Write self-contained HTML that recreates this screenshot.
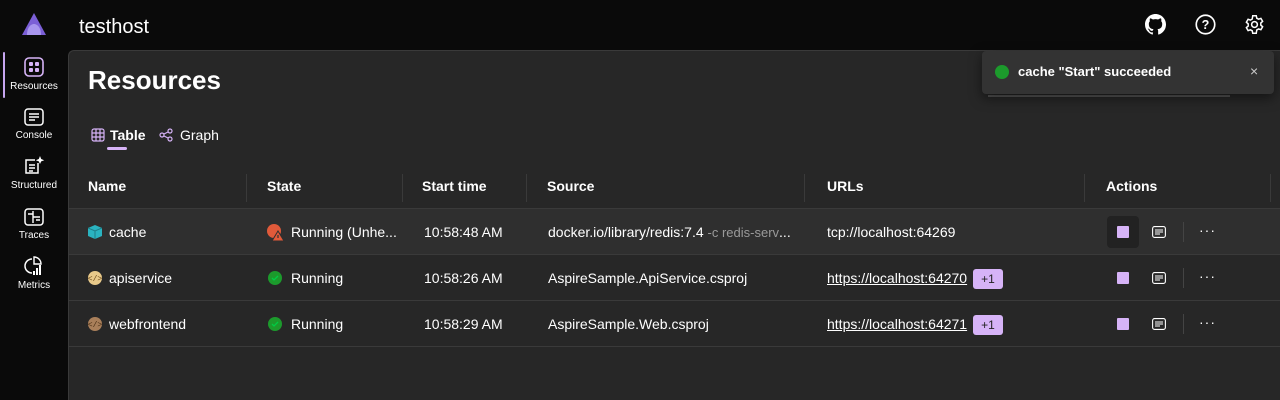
<!DOCTYPE html>
<html><head><meta charset="utf-8"><style>
*{box-sizing:border-box;margin:0;padding:0}
body{width:1280px;height:400px;background:#0a0a0a;font-family:"Liberation Sans",sans-serif;color:#fff;overflow:hidden;position:relative;font-size:14px}
.hdr{position:absolute;left:0;top:0;width:1280px;height:50px;background:#0a0a0a}
.main{position:absolute;left:68px;top:50px;width:1212px;height:350px;background:#272727;border-left:1px solid #3a3a3a;border-top:1px solid #3a3a3a;border-top-left-radius:6px}
.nav{position:absolute;left:0;width:68px;text-align:center;font-size:10px;color:#fff}
.nav svg{display:block;margin:0 auto 4px}
.abs{position:absolute}
.row{position:absolute;left:0;width:1212px;height:46px;border-bottom:1px solid #3a3a3a}
.cell{position:absolute;top:0;line-height:46px;white-space:nowrap;font-size:14px}
.th{position:absolute;top:0;line-height:44px;font-weight:bold;font-size:14px}
.div{position:absolute;top:10px;width:1px;height:28px;background:#3a3a3a}
.stop{position:absolute;width:12px;height:12px;background:#d6b3f7;border-radius:1px}
.badge{display:inline-block;background:#d6b3f7;color:#222;font-size:12px;line-height:20px;padding:0 8px;border-radius:3px;margin-left:6px;vertical-align:middle}
.lnk{text-decoration:underline;color:#fff}
</style></head><body>
<div class="hdr">
<svg class="abs" style="left:22px;top:13px" width="24" height="22" viewBox="0 0 24 22"><path d="M12 0L24 22H0Z" fill="#7b5fd6"/><path d="M5 22C5 14 9 11 12 11s7 3 7 11Z" fill="#a895ee"/></svg>
<div class="abs" style="left:79px;top:16px;font-size:20px">testhost</div>
<svg class="abs" style="left:1145px;top:14px" width="21" height="21" viewBox="0 0 16 16"><path fill="#fff" d="M8 0C3.58 0 0 3.58 0 8c0 3.54 2.290 6.53 5.47 7.59.4.07.55-.17.55-.38v-1.33c-2.23.48-2.7-1.070-2.7-1.07-.36-.92-.89-1.17-.89-1.17-.73-.5.06-.49.06-.49.8.06 1.23.83 1.23.83.72 1.22 1.870.87 2.33.66.07-.52.28-.87.51-1.07-1.78-.2-3.64-.89-3.64-3.95 0-.87.31-1.59.82-2.15-.08-.2-.36-1.02.08-2.12 0 0 .67-.21 2.2.82a7.6 7.6 0 014 0c1.53-1.04 2.2-.82 2.2-.82.44 1.1.16 1.92.08 2.12.51.56.82 1.27.82 2.15 0 3.07-1.87 3.75-3.65 3.95.29.25.54.73.54 1.48v2.2c0 .21.15.46.55.38A8 8 0 0016 8c0-4.42-3.58-8-8-8z"/></svg>
<svg class="abs" style="left:1195px;top:14px" width="21" height="21" viewBox="0 0 20 20"><circle cx="10" cy="10" r="8.8" fill="none" stroke="#fff" stroke-width="1.6"/><text x="10" y="14.5" text-anchor="middle" font-size="12" font-weight="bold" fill="#fff" font-family="Liberation Sans">?</text></svg>
<svg class="abs" style="left:1244px;top:14px" width="21" height="21" viewBox="0 0 24 24"><path fill="none" stroke="#fff" stroke-width="1.7" d="M10 2h4l.6 2.8 2 1.1 2.7-.9 2 3.4-2.1 1.9v2.4l2.1 1.9-2 3.4-2.7-.9-2 1.1L14 22h-4l-.6-2.8-2-1.1-2.7.9-2-3.4 2.1-1.9V11.3L2.7 9.4l2-3.4 2.7.9 2-1.1z"/><circle cx="12" cy="12" r="3.3" fill="none" stroke="#fff" stroke-width="1.7"/></svg>
</div>
<div class="abs" style="left:3px;top:52px;width:2px;height:46px;background:#c6a5f0;border-radius:1px"></div>
<div class="nav" style="top:57px"><svg width="20" height="20" viewBox="0 0 20 20"><rect x="1" y="1" width="18" height="18" rx="4" fill="none" stroke="#d6b3f7" stroke-width="1.6"/><rect x="5" y="5" width="4" height="4" rx="1" fill="#d6b3f7"/><rect x="11" y="5" width="4" height="4" rx="1" fill="#d6b3f7"/><rect x="5" y="11" width="4" height="4" rx="1" fill="#d6b3f7"/><rect x="11" y="11" width="4" height="4" rx="1" fill="#d6b3f7"/></svg>Resources</div>
<div class="nav" style="top:108px"><svg width="20" height="18" viewBox="0 0 20 18"><rect x="1" y="1" width="18" height="16" rx="3" fill="none" stroke="#fff" stroke-width="1.5"/><path d="M5 6h10M5 9h10M5 12h6" stroke="#fff" stroke-width="1.4"/></svg>Console</div>
<div class="nav" style="top:156px"><svg width="22" height="20" viewBox="0 0 22 20"><path d="M15 7v10H3V4h9" fill="none" stroke="#fff" stroke-width="1.5"/><path d="M6 9h6M6 12h6M6 15h4" stroke="#fff" stroke-width="1.4"/><path d="M17 0l1.2 3 3 1.2-3 1.2L17 8l-1.2-2.6-3-1.2 3-1.2z" fill="#fff"/></svg>Structured</div>
<div class="nav" style="top:208px"><svg width="20" height="18" viewBox="0 0 20 18"><rect x="1" y="1" width="18" height="16" rx="3" fill="none" stroke="#fff" stroke-width="1.5"/><path d="M4 6h5M9 3v12M9 9h7M12 12h4" stroke="#fff" stroke-width="1.4"/></svg>Traces</div>
<div class="nav" style="top:256px"><svg width="22" height="20" viewBox="0 0 22 20"><path d="M9 3a7 7 0 100 14" fill="none" stroke="#fff" stroke-width="1.5"/><path d="M11 1v7h7a7 7 0 00-7-7z" fill="none" stroke="#fff" stroke-width="1.4"/><rect x="13" y="12" width="2" height="7" fill="#fff"/><rect x="16" y="9" width="2" height="10" fill="#fff"/><rect x="10" y="15" width="2" height="4" fill="#fff"/></svg>Metrics</div>

<div class="main">
<div class="abs" style="left:19px;top:14px;font-size:26px;font-weight:bold">Resources</div>
<svg class="abs" style="left:22px;top:77px" width="14" height="14" viewBox="0 0 14 14"><rect x="1" y="1" width="12" height="12" rx="2" fill="none" stroke="#d6b3f7" stroke-width="1.2"/><path d="M5 1v12M9 1v12M1 5h12M1 9h12" stroke="#d6b3f7" stroke-width="1.2"/></svg>
<div class="abs" style="left:41px;top:76px;font-weight:bold;font-size:14px">Table</div>
<div class="abs" style="left:38px;top:96px;width:20px;height:3px;background:#d6b3f7;border-radius:2px"></div>
<svg class="abs" style="left:90px;top:77px" width="14" height="14" viewBox="0 0 14 14" fill="none" stroke="#d6b3f7" stroke-width="1.2"><circle cx="3" cy="7" r="2"/><circle cx="11" cy="3" r="2"/><circle cx="11" cy="11" r="2"/><path d="M5 6l4-2M5 8l4 2"/></svg>
<div class="abs" style="left:111px;top:76px;font-size:14px">Graph</div>

<div class="row" style="top:113px;height:45px">
<div class="th" style="left:19px">Name</div><div class="div" style="left:177px"></div>
<div class="th" style="left:198px">State</div><div class="div" style="left:333px"></div>
<div class="th" style="left:353px">Start time</div><div class="div" style="left:457px"></div>
<div class="th" style="left:478px">Source</div><div class="div" style="left:735px"></div>
<div class="th" style="left:758px">URLs</div><div class="div" style="left:1015px"></div>
<div class="th" style="left:1037px">Actions</div><div class="div" style="left:1201px"></div>
</div>

<div class="row" style="top:158px;background:#2f2f2f">
<svg class="abs" style="left:19px;top:16px" width="14" height="14" viewBox="0 0 14 14"><path d="M7 0l7 3v8l-7 3-7-3V3z" fill="#2ab3c0"/><path d="M0 3l7 3 7-3M7 6v8" stroke="#1d7e88" stroke-width="1" fill="none"/></svg>
<div class="cell" style="left:40px">cache</div>
<svg class="abs" style="left:198px;top:15px" width="17" height="17" viewBox="0 0 17 17"><circle cx="7" cy="7" r="7" fill="#e05a3a"/><path d="M11 7l6 10H5z" fill="#e05a3a" stroke="#2f2f2f" stroke-width="1"/><path d="M11 11v3" stroke="#2f2f2f" stroke-width="1.2"/></svg>
<div class="cell" style="left:222px">Running (Unhe...</div>
<div class="cell" style="left:355px">10:58:48 AM</div>
<div class="cell" style="left:479px">docker.io/library/redis:7.4 <span style="color:#9a9a9a;font-size:13px">-c redis-serv</span>...</div>
<div class="cell" style="left:758px">tcp://localhost:64269</div>
<div class="abs" style="left:1038px;top:7px;width:32px;height:32px;background:#222;border-radius:4px"></div>
</div>
<div class="row" style="top:204px">
<svg class="abs" style="left:19px;top:16px" width="14" height="14"><circle cx="7" cy="7" r="7" fill="#e8c98a"/><text x="7" y="10" text-anchor="middle" font-size="8" fill="#6b4a1a" font-family="Liberation Mono">&lt;/&gt;</text></svg>
<div class="cell" style="left:40px">apiservice</div>
<svg class="abs" style="left:199px;top:16px" width="14" height="14"><circle cx="7" cy="7" r="7" fill="#1c9a2c"/><path d="M4 7l2 2 4-4" stroke="#0c4" stroke-width="1.3" fill="none"/></svg>
<div class="cell" style="left:222px">Running</div>
<div class="cell" style="left:355px">10:58:26 AM</div>
<div class="cell" style="left:479px">AspireSample.ApiService.csproj</div>
<div class="cell" style="left:758px"><span class="lnk">https://localhost:64270</span><span class="badge">+1</span></div>
</div>
<div class="row" style="top:250px">
<svg class="abs" style="left:19px;top:16px" width="14" height="14"><circle cx="7" cy="7" r="7" fill="#a97f5a"/><text x="7" y="10" text-anchor="middle" font-size="8" fill="#4a2f15" font-family="Liberation Mono">&lt;/&gt;</text></svg>
<div class="cell" style="left:40px">webfrontend</div>
<svg class="abs" style="left:199px;top:16px" width="14" height="14"><circle cx="7" cy="7" r="7" fill="#1c9a2c"/><path d="M4 7l2 2 4-4" stroke="#0c4" stroke-width="1.3" fill="none"/></svg>
<div class="cell" style="left:222px">Running</div>
<div class="cell" style="left:355px">10:58:29 AM</div>
<div class="cell" style="left:479px">AspireSample.Web.csproj</div>
<div class="cell" style="left:758px"><span class="lnk">https://localhost:64271</span><span class="badge">+1</span></div>
</div>
</div>

<div class="stop" style="left:1117px;top:226px"></div>
<div class="stop" style="left:1117px;top:272px"></div>
<div class="stop" style="left:1117px;top:318px"></div>
<svg class="abs" style="left:1152px;top:226px" width="14" height="12"><rect x=".6" y=".6" width="12.8" height="10.8" rx="2" fill="none" stroke="#fff" stroke-width="1.1"/><path d="M3 4h8M3 6h8M3 8h5" stroke="#fff" stroke-width="1"/></svg>
<svg class="abs" style="left:1152px;top:272px" width="14" height="12"><rect x=".6" y=".6" width="12.8" height="10.8" rx="2" fill="none" stroke="#fff" stroke-width="1.1"/><path d="M3 4h8M3 6h8M3 8h5" stroke="#fff" stroke-width="1"/></svg>
<svg class="abs" style="left:1152px;top:318px" width="14" height="12"><rect x=".6" y=".6" width="12.8" height="10.8" rx="2" fill="none" stroke="#fff" stroke-width="1.1"/><path d="M3 4h8M3 6h8M3 8h5" stroke="#fff" stroke-width="1"/></svg>
<div class="abs" style="left:1183px;top:222px;width:1px;height:20px;background:#444"></div>
<div class="abs" style="left:1183px;top:268px;width:1px;height:20px;background:#444"></div>
<div class="abs" style="left:1183px;top:314px;width:1px;height:20px;background:#444"></div>
<div class="abs" style="left:1199px;top:222px;font-size:14px;letter-spacing:1px">···</div>
<div class="abs" style="left:1199px;top:268px;font-size:14px;letter-spacing:1px">···</div>
<div class="abs" style="left:1199px;top:314px;font-size:14px;letter-spacing:1px">···</div>

<div class="abs" style="left:988px;top:95px;width:242px;height:2px;background:#555"></div>
<div class="abs" style="left:982px;top:51px;width:292px;height:43px;background:#333;border-radius:4px;box-shadow:0 4px 12px rgba(0,0,0,.5)">
<svg class="abs" style="left:13px;top:14px" width="14" height="14"><circle cx="7" cy="7" r="7" fill="#1c9a2c"/></svg>
<div class="abs" style="left:36px;top:13px;font-size:13px;font-weight:bold">cache "Start" succeeded</div>
<div class="abs" style="left:268px;top:12px;font-size:14px;color:#ccc">×</div>
</div>
</body></html>
